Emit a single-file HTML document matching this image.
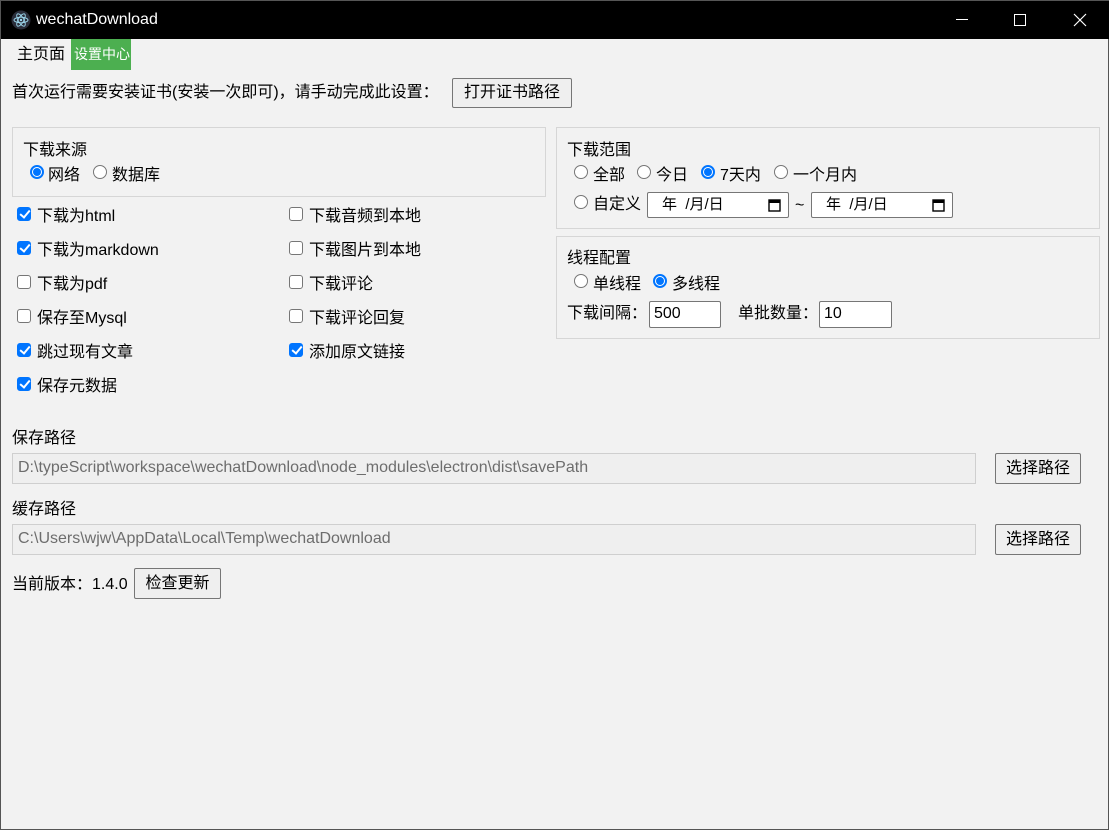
<!DOCTYPE html>
<html><head><meta charset="utf-8"><style>
*{box-sizing:border-box;margin:0;padding:0}
body{width:1109px;height:830px;background:#f2f2f2;font-family:"Liberation Sans","Noto Sans CJK SC",sans-serif;font-size:16px;color:#000;position:relative;overflow:hidden;border:1px solid #555}
.a{position:absolute;white-space:nowrap;line-height:16px}
.tb{position:absolute;left:0;top:0;width:1109px;height:38px;background:#000;color:#fff}
.btn{position:absolute;background:#efefef;border:1px solid #767676;border-radius:2px;font-size:16px;text-align:center}
.box{position:absolute;border:1px solid #d6d6d6}
.cb{position:absolute;width:14px;height:14px;border:1px solid #767676;border-radius:3px;background:#fff}
.cb.on{background:#0075ff;border-color:#0075ff}
.cb.on:after{content:"";position:absolute;left:4px;top:0px;width:4px;height:8px;border:solid #fff;border-width:0 2px 2px 0;transform:rotate(40deg)}
.rd{position:absolute;width:14px;height:14px;border:1px solid #767676;border-radius:50%;background:#fff}
.rd.on{border:2px solid #0075ff}
.rd.on:after{content:"";position:absolute;left:1px;top:1px;width:8px;height:8px;border-radius:50%;background:#0075ff}
.in{position:absolute;background:#fff;border:1px solid #767676;border-radius:2px;padding-left:4px;line-height:24px}
.path{position:absolute;background:#efefef;border:1px solid #cfcfcf;color:#6d6d6d;padding-left:5px;line-height:28px;font-size:16px}
.date{position:absolute;background:#fff;border:1px solid #767676;border-radius:2px;height:26px;font-size:15px;line-height:24px}
</style></head><body>
<div class="tb">
<svg class="a" style="left:10px;top:9px" width="20" height="20" viewBox="0 0 20 20"><circle cx="10" cy="10" r="9.5" fill="#2b2e3b"/><g fill="none" stroke="#9fdaf0" stroke-width="0.9"><ellipse cx="10" cy="10" rx="7" ry="2.8"/><ellipse cx="10" cy="10" rx="7" ry="2.8" transform="rotate(60 10 10)"/><ellipse cx="10" cy="10" rx="7" ry="2.8" transform="rotate(-60 10 10)"/></g><circle cx="10" cy="10" r="1.2" fill="#9fdaf0"/></svg>
<div class="a" style="left:35px;top:11px;font-size:16px">wechatDownload</div>
<div class="a" style="left:955px;top:18px;width:12px;height:1px;background:#fff"></div>
<div class="a" style="left:1013px;top:13px;width:12px;height:12px;border:1px solid #fff"></div>
<svg class="a" style="left:1072px;top:12px" width="14" height="14"><path d="M1 1L13 13M13 1L1 13" stroke="#fff" stroke-width="1.2"/></svg>
</div>
<div class="a" style="left:16px;top:46px">主页面</div>
<div class="a" style="left:70px;top:38px;width:60px;height:31px;background:#4caf50;color:#fff;line-height:31px;padding-left:3px;font-size:14px">设置中心</div>
<div class="a" style="left:11px;top:84px">首次运行需要安装证书(安装一次即可)，请手动完成此设置：</div>
<div class="btn" style="left:451px;top:77px;width:120px;height:30px;line-height:28px">打开证书路径</div>

<div class="box" style="left:11px;top:126px;width:534px;height:70px"></div>
<div class="a" style="left:22px;top:142px">下载来源</div>
<div class="rd on" style="left:29px;top:164px"></div><div class="a" style="left:47px;top:167px">网络</div>
<div class="rd" style="left:92px;top:164px"></div><div class="a" style="left:111px;top:167px">数据库</div>

<div class="cb on" style="left:16px;top:206px"></div><div class="a" style="left:36px;top:208px">下载为html</div>
<div class="cb on" style="left:16px;top:240px"></div><div class="a" style="left:36px;top:242px">下载为markdown</div>
<div class="cb" style="left:16px;top:274px"></div><div class="a" style="left:36px;top:276px">下载为pdf</div>
<div class="cb" style="left:16px;top:308px"></div><div class="a" style="left:36px;top:310px">保存至Mysql</div>
<div class="cb on" style="left:16px;top:342px"></div><div class="a" style="left:36px;top:344px">跳过现有文章</div>
<div class="cb on" style="left:16px;top:376px"></div><div class="a" style="left:36px;top:378px">保存元数据</div>
<div class="cb" style="left:288px;top:206px"></div><div class="a" style="left:308px;top:208px">下载音频到本地</div>
<div class="cb" style="left:288px;top:240px"></div><div class="a" style="left:308px;top:242px">下载图片到本地</div>
<div class="cb" style="left:288px;top:274px"></div><div class="a" style="left:308px;top:276px">下载评论</div>
<div class="cb" style="left:288px;top:308px"></div><div class="a" style="left:308px;top:310px">下载评论回复</div>
<div class="cb on" style="left:288px;top:342px"></div><div class="a" style="left:308px;top:344px">添加原文链接</div>

<div class="box" style="left:555px;top:126px;width:544px;height:102px"></div>
<div class="a" style="left:566px;top:142px">下载范围</div>
<div class="rd" style="left:573px;top:164px"></div><div class="a" style="left:592px;top:167px">全部</div>
<div class="rd" style="left:636px;top:164px"></div><div class="a" style="left:655px;top:167px">今日</div>
<div class="rd on" style="left:700px;top:164px"></div><div class="a" style="left:719px;top:167px">7天内</div>
<div class="rd" style="left:773px;top:164px"></div><div class="a" style="left:792px;top:167px">一个月内</div>
<div class="rd" style="left:573px;top:194px"></div><div class="a" style="left:592px;top:196px">自定义</div>
<div class="date" style="left:646px;top:191px;width:142px"><span style="position:absolute;left:14px">年 &nbsp;/月/日</span><svg style="position:absolute;right:7px;top:5px" width="13" height="14"><rect x="1" y="2" width="11" height="11" fill="none" stroke="#000" stroke-width="1.4"/><rect x="1" y="2" width="11" height="3" fill="#000"/></svg></div>
<div class="a" style="left:794px;top:197px">~</div>
<div class="date" style="left:810px;top:191px;width:142px"><span style="position:absolute;left:14px">年 &nbsp;/月/日</span><svg style="position:absolute;right:7px;top:5px" width="13" height="14"><rect x="1" y="2" width="11" height="11" fill="none" stroke="#000" stroke-width="1.4"/><rect x="1" y="2" width="11" height="3" fill="#000"/></svg></div>

<div class="box" style="left:555px;top:235px;width:544px;height:103px"></div>
<div class="a" style="left:566px;top:250px">线程配置</div>
<div class="rd" style="left:573px;top:273px"></div><div class="a" style="left:592px;top:276px">单线程</div>
<div class="rd on" style="left:652px;top:273px"></div><div class="a" style="left:671px;top:276px">多线程</div>
<div class="a" style="left:566px;top:305px">下载间隔：</div>
<div class="in" style="left:648px;top:300px;width:72px;height:27px">500</div>
<div class="a" style="left:737px;top:305px">单批数量：</div>
<div class="in" style="left:818px;top:300px;width:73px;height:27px">10</div>

<div class="a" style="left:11px;top:430px">保存路径</div>
<div class="path" style="left:11px;top:452px;width:964px;height:31px">D:\typeScript\workspace\wechatDownload\node_modules\electron\dist\savePath</div>
<div class="btn" style="left:994px;top:452px;width:86px;height:31px;line-height:29px">选择路径</div>
<div class="a" style="left:11px;top:501px">缓存路径</div>
<div class="path" style="left:11px;top:523px;width:964px;height:31px">C:\Users\wjw\AppData\Local\Temp\wechatDownload</div>
<div class="btn" style="left:994px;top:523px;width:86px;height:31px;line-height:29px">选择路径</div>
<div class="a" style="left:11px;top:576px">当前版本：1.4.0</div>
<div class="btn" style="left:133px;top:567px;width:87px;height:31px;line-height:29px">检查更新</div>
</body></html>
